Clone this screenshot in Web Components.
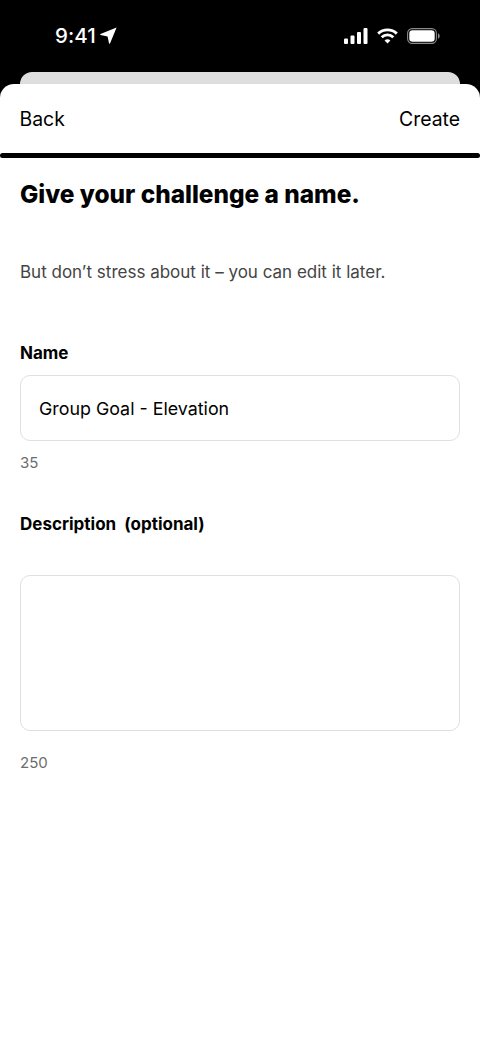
<!DOCTYPE html>
<html><head><meta charset="utf-8"><style>
html,body{margin:0;padding:0;background:#000;height:1040px;overflow:hidden;font-family:Inter,"Liberation Sans",sans-serif}
</style></head><body>
<template id="t-status"><style>
:host{display:flex;height:72px;box-sizing:border-box;padding:0 40px 0 55px;justify-content:space-between;align-items:flex-start;color:#fff}
.l{display:flex;align-items:center;gap:4px;margin-top:24px;height:23px;font:500 20.5px/23px Inter,sans-serif;letter-spacing:.1px}
.r{display:flex;align-items:center;gap:9px;margin-top:28px;height:16px}
svg{display:block}
</style><div class="l"><span>9:41</span><svg width="17" height="17" viewBox="0 0 17 17"><path d="M16.6.4 10 16.4c-.2.5-.9.4-1-.1L7.6 9.5.6 8.1c-.5-.1-.6-.8-.1-1Z" fill="#fff"/></svg></div>
<div class="r"><svg width="24" height="16" viewBox="0 0 24 16" fill="#fff"><rect x="0" y="10.5" width="4" height="5.5" rx="1"/><rect x="6.5" y="7.5" width="4" height="8.5" rx="1"/><rect x="13" y="4" width="4" height="12" rx="1"/><rect x="19.5" y="0" width="4" height="16" rx="1"/></svg>
<svg width="21" height="16" viewBox="0 0 21 16" fill="none" stroke="#fff" stroke-width="2.9"><path d="M1.2 5.6a13.5 13.5 0 0 1 18.6 0"/><path d="M4.7 9.2a8.5 8.5 0 0 1 11.6 0"/><path d="M10.5 15.6 7.6 12.5a4 4 0 0 1 5.8 0Z" fill="#fff" stroke="none"/></svg>
<svg width="33" height="16" viewBox="0 0 33 16" fill="none"><rect x=".6" y=".6" width="28.8" height="14.8" rx="4.6" stroke="#8a8a8a" stroke-width="1.1"/><rect x="2.3" y="2.3" width="25.4" height="11.4" rx="3.2" fill="#fff"/><path d="M31 5.2v5.6c1-.4 1.7-1.6 1.7-2.8S32 5.6 31 5.2Z" fill="#8a8a8a"/></svg></div></template>

<template id="t-sheet"><style>
:host{display:block;background:#fff;height:956px;border-radius:14px 14px 0 0}
</style><slot></slot></template>

<template id="t-nav"><style>
:host{display:block}
.row{display:flex;justify-content:space-between;align-items:center;height:69px;padding:0 20px 0 19.5px;font:400 19.4px/24px Inter,sans-serif;color:#000;box-sizing:border-box}
.bar{height:5px;background:#000;border-radius:3px}
</style><div class="row"><span>Back</span><span>Create</span></div><div class="bar"></div></template>

<template id="t-field"><style>
:host{display:block}
.label{font:700 17px/22px Inter,sans-serif;color:#000;white-space:pre}
.box{box-sizing:border-box;border:1.5px solid #e0e0e0;border-radius:10px;margin-top:var(--gap,11px);height:var(--h,66px);padding:0 18px;font:400 17.85px/65px Inter,sans-serif;color:#000}
.count{margin-top:var(--cgap,12px);font:400 15px/20px Inter,sans-serif;color:#6d6d6d}
</style><div class="label"><slot name="label"></slot></div><div class="box"><slot></slot></div><div class="count"><slot name="count"></slot></div></template>

<template id="t-form"><style>
:host{display:block;padding:22px 20px 0}
h1{margin:0;font:800 24.4px/28px Inter,sans-serif;color:#000}
p{margin:52px 0 0;font:400 17px/24px Inter,sans-serif;color:#444}
.a{margin-top:58px;display:block}
.b{margin-top:40px;display:block}
</style><h1>Give your challenge a name.</h1><p>But don’t stress about it – you can edit it later.</p>
<div class="a"><slot name="a"></slot></div><div class="b"><slot name="b"></slot></div></template>

<template id="t-peek"><style>
:host{display:block;height:12px;margin:0 20px;background:#dedede;border-radius:12px 12px 0 0}
</style></template>

<x-status></x-status>
<x-peek></x-peek>
<x-sheet>
  <x-nav></x-nav>
  <x-form>
    <x-field slot="a"><span slot="label">Name</span>Group Goal - Elevation<span slot="count">35</span></x-field>
    <x-field slot="b" style="--gap:40px;--h:156px;--cgap:22px"><span slot="label">Description&nbsp; (optional)</span><span slot="count">250</span></x-field>
  </x-form>
</x-sheet>
<script>
for (const [tag,id] of [['x-status','t-status'],['x-peek','t-peek'],['x-sheet','t-sheet'],['x-nav','t-nav'],['x-form','t-form'],['x-field','t-field']]) {
  customElements.define(tag, class extends HTMLElement {
    constructor(){super();this.attachShadow({mode:'open'}).appendChild(document.getElementById(id).content.cloneNode(true));}
  });
}
</script>
</body></html>
